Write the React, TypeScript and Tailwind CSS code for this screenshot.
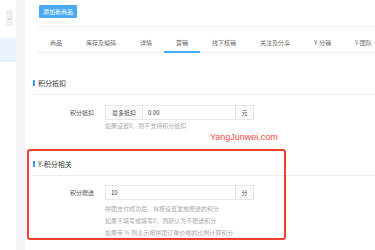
const tabs = ["商品", "库存及编码", "详情", "营销", "线下核销", "关注及分享", "Y-分销", "Y-团队"];

function SectionTitle({ title }: { title: string }) {
  return (
    <div className="flex items-center gap-[3px] -ml-[5px] pb-[6px] border-b border-[#eeeeee]">
      <span className="w-[2px] h-[6px] bg-[#3d9cf0] ml-[0px]"></span>
      <span className="text-[7px] leading-[10px] text-[#333]">{title}</span>
    </div>
  );
}

export default function App() {
  return (
    <div
      className="relative w-[375px] h-[250px] overflow-hidden flex bg-white"
      style={{ fontFamily: '"Noto Sans CJK SC", "Noto Sans", sans-serif' }}
    >
      {/* sidebar */}
      <div className="w-[16px] shrink-0 bg-white flex flex-col">
        <div className="mt-[10px] ml-[6px] w-[7px] h-[16px] bg-[#eef0f3] flex items-center justify-center text-[5px] text-[#aaa]">«</div>
        <div className="mt-[12px] h-[24px] bg-[#eaf3fd]"></div>
      </div>
      <div className="w-[9px] shrink-0 bg-[#f4f5f7]"></div>

      {/* main */}
      <div className="flex-1 bg-white pl-[13px] pt-[5px] flex flex-col">
        <button className="ml-[1px] w-[38px] h-[13px] bg-[#48aaf6] text-white text-[6px] leading-[13px] rounded-[1px]">
          添加新商品
        </button>
        <div className="mt-[8px] border-t border-[#f0f0f0]"></div>

        <div className="flex border-b border-[#eeeeee] whitespace-nowrap">
          {tabs.map((t, i) => (
            <div
              key={t}
              className={
                i === 3
                  ? "px-[12px] pt-[12px] pb-[4px] -mb-[1px] border-b-2 border-[#48aaf6] text-[6px] leading-[8px] text-[#555]"
                  : "px-[12px] pt-[12px] pb-[4px] text-[6px] leading-[8px] text-[#666]"
              }
            >
              {t}
            </div>
          ))}
        </div>

        {/* 积分抵扣 */}
        <div className="mt-[25px]">
          <SectionTitle title="积分抵扣" />
          <div className="mt-[10px] flex items-center">
            <div className="w-[56px] text-right text-[6px] leading-[8px] text-[#555]">积分抵扣</div>
            <div className="ml-[11px] flex h-[15px] border border-[#e8e8e8]">
              <div className="w-[37px] bg-[#fafafa] border-r border-[#e8e8e8] text-[6px] leading-[13px] text-center text-[#555]">最多抵扣</div>
              <div className="w-[92px] pl-[5px] text-[6px] leading-[13px] text-[#333]">0.00</div>
              <div className="w-[18px] bg-[#fafafa] border-l border-[#e8e8e8] text-[6px] leading-[13px] text-center text-[#555]">元</div>
            </div>
          </div>
          <div className="mt-[2px] ml-[67px] text-[6px] leading-[8px] text-[#aaa]">如果设置0，则不支持积分抵扣</div>
        </div>

        {/* Y-积分相关 */}
        <div className="mt-[29px]">
          <SectionTitle title="Y-积分相关" />
          <div className="mt-[9px] flex items-center">
            <div className="w-[56px] text-right text-[6px] leading-[8px] text-[#555]">积分赠送</div>
            <div className="ml-[11px] flex h-[15px] border border-[#e8e8e8]">
              <div className="w-[129px] pl-[5px] text-[6px] leading-[13px] text-[#333]">10</div>
              <div className="w-[18px] bg-[#fafafa] border-l border-[#e8e8e8] text-[6px] leading-[13px] text-center text-[#555]">分</div>
            </div>
          </div>
          <div className="mt-[3px] ml-[67px] text-[6px] leading-[12px] text-[#aaa]">
            <div>拼团支付成功后，将按设置发放赠送的积分</div>
            <div>如果不填写或填写0，则默认为不赠送积分</div>
            <div>如果带 % 则表示按拼团订单价格的比例计算积分</div>
          </div>
        </div>
      </div>

      {/* watermark and annotation */}
      <div
        className="absolute left-[210px] top-[132px] text-[9px] leading-[10px] text-[#f5493d]"
        style={{ fontFamily: '"Liberation Sans", Arial, sans-serif' }}
      >
        YangJunwei.com
      </div>
      <div className="absolute left-[27px] top-[149px] w-[259px] h-[91px] border-2 border-[#f2402f] rounded-[3px]"></div>
    </div>
  );
}
